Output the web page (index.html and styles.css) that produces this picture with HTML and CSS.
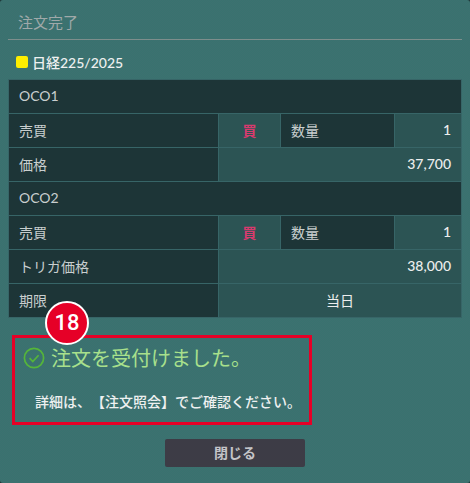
FILE: index.html
```html
<!DOCTYPE html>
<html>
<head>
    <title>注文完了</title>
    <link rel="stylesheet" href="styles.css">
</head>
<body>
    <div class="panel">
        <h2 class="title">注文完了</h2>
        <div class="brand"><span class="mark"></span>日経225/2025</div>
        <table class="order">
            <colgroup>
                <col class="c1"><col class="c2"><col class="c3"><col class="c4">
            </colgroup>
            <tr><th colspan="4">OCO1</th></tr>
            <tr><th>売買</th><td class="buy">買</td><th class="qty">数量</th><td class="num">1</td></tr>
            <tr><th>価格</th><td class="num" colspan="3">37,700</td></tr>
            <tr><th colspan="4">OCO2</th></tr>
            <tr><th>売買</th><td class="buy">買</td><th class="qty">数量</th><td class="num">1</td></tr>
            <tr><th>トリガ価格</th><td class="num" colspan="3">38,000</td></tr>
            <tr><th>期限</th><td class="center" colspan="3">当日</td></tr>
        </table>
        <div class="message">
            <span class="badge">18</span>
            <p class="done">
                <svg class="check" width="22" height="22" viewBox="0 0 22 22">
                    <circle cx="11" cy="11" r="9.6" fill="none" stroke="#55b53a" stroke-width="1.7"/>
                    <path d="M6.6 11.2l3.2 3.4 5.8-6.4" fill="none" stroke="#55b53a" stroke-width="1.7"/>
                </svg>
                注文を受付けました。
            </p>
            <p class="detail">詳細は、【注文照会】でご確認ください。</p>
        </div>
        <div class="actions"><button>閉じる</button></div>
    </div>
</body>
</html>
```

FILE: styles.css
```css
html, body {
    height: 100%;
}

body {
    margin: 0;
    background: #1d3537;
    font-family: Lato, "Noto Sans CJK JP", sans-serif;
    font-size: 14px;
    color: #d5d9d9;
    text-spacing-trim: space-all;
}

.panel {
    box-sizing: border-box;
    width: 470px;
    height: 483px;
    padding: 0 8px;
    background: repeating-conic-gradient(#38736f 0 25%, #3e7070 0 50%) 0 0 / 2px 2px;
    border-radius: 3px;
}

.title {
    margin: 0;
    height: 39px;
    padding-left: 10px;
    line-height: 45px;
    font-size: 15px;
    font-weight: normal;
    color: #9fa9a9;
    border-bottom: 1px solid #7d8e8c;
}

.brand {
    display: flex;
    align-items: center;
    height: 39px;
    padding-top: 5px;
    box-sizing: border-box;
    font-size: 14px;
    font-weight: 500;
    color: #eef0f0;
}

.mark {
    width: 12px;
    height: 12px;
    margin-left: 8px;
    margin-right: 4px;
    background: #ffee00;
    border-radius: 2px;
}

.order {
    width: 453px;
    table-layout: fixed;
    border-collapse: collapse;
}

.c1 { width: 210px; }
.c2 { width: 62px; }
.c3 { width: 114px; }
.c4 { width: 67px; }

.order th, .order td {
    height: 31px;
    padding: 0 10px 2px;
    border: 1px solid #376567;
    font-weight: normal;
}

.order th {
    background: #1d3537;
    text-align: left;
    color: #c9cfcf;
}

.order td {
    background: #2c5454;
    color: #eceeee;
}

.order .buy {
    text-align: center;
    font-weight: bold;
    color: #d83a6e;
}

.order .num {
    text-align: right;
    font-weight: 500;
}

.order .center {
    text-align: center;
}

.message {
    position: relative;
    box-sizing: border-box;
    width: 300px;
    height: 90px;
    margin: 17px 0 0 4px;
    border: 3px solid #e60027;
}

.badge {
    position: absolute;
    left: 30px;
    top: -37px;
    box-sizing: border-box;
    width: 44px;
    height: 44px;
    border: 2px solid #fff;
    border-radius: 50%;
    background: #e60027;
    color: #fff;
    font-family: Roboto, sans-serif;
    font-size: 22px;
    font-weight: 500;
    line-height: 40px;
    text-align: center;
}

.done {
    display: flex;
    align-items: center;
    gap: 6px;
    margin: 0;
    padding: 7px 0 0 8px;
    font-size: 20px;
    line-height: 26px;
    color: #a8e08c;
}

.detail {
    margin: 0;
    padding: 21px 0 0 20px;
    font-size: 14px;
    font-weight: 500;
    line-height: 20px;
    color: #eef0f0;
}

.actions {
    display: flex;
    justify-content: center;
    margin-top: 14px;
}

button {
    width: 140px;
    height: 28px;
    padding: 0 0 2px;
    border: none;
    border-radius: 2px;
    background: #3d3c46;
    color: #c4c4c8;
    font-family: inherit;
    font-size: 14px;
    font-weight: bold;
}
```
